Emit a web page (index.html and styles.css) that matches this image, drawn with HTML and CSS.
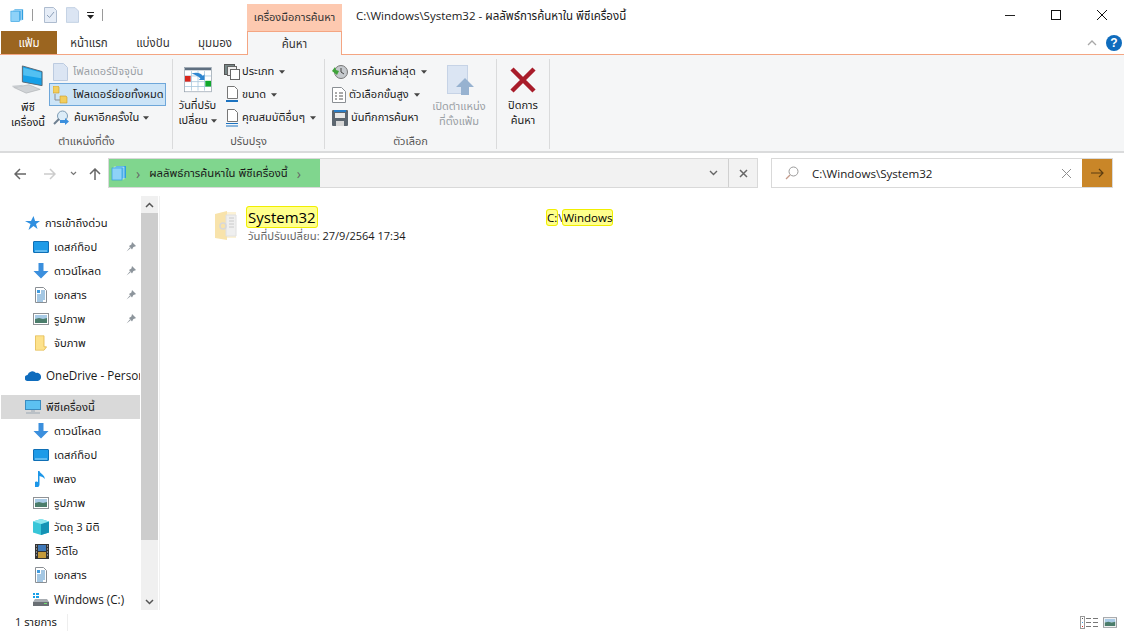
FILE: index.html
```html
<!DOCTYPE html>
<html lang="th">
<head>
    <meta charset="UTF-8">
    <title>C:\Windows\System32 - ผลลัพธ์การค้นหาใน พีซีเครื่องนี้</title>
    <link rel="stylesheet" href="styles.css">
</head>
<body>
    <svg class="defs" width="0" height="0">
        <symbol id="i-lib" viewBox="0 0 16 16">
            <rect x="5" y="1" width="10" height="12" fill="#2f9fe0"/>
            <rect x="3" y="2" width="10" height="12" fill="#5fb8ee" stroke="#fff" stroke-width=".5"/>
            <rect x="1" y="3" width="10" height="12" fill="#8ed2f8" stroke="#2f9fe0" stroke-width=".7"/>
        </symbol>
        <symbol id="i-desktop" viewBox="0 0 16 12">
            <rect x=".5" y=".5" width="15" height="11" rx=".5" fill="#1e9be8" stroke="#0f6fb5"/>
            <rect x="2" y="9.500" width="12" height="1" fill="#a5dcf8"/>
        </symbol>
        <symbol id="i-down" viewBox="0 0 16 16">
            <path d="M5.500 0h5v8h5L8 15.500.5 8h5z" fill="#3b8fdd"/>
        </symbol>
        <symbol id="i-doc" viewBox="0 0 12 16">
            <path d="M.5.500h8l3 3v12H.5z" fill="#fff" stroke="#8a8f94"/>
            <path d="M2 3h3v3H2z" fill="#3f9be0"/>
            <path d="M6 4h4M6 6h4M2 8h8M2 10h8M2 12h8M2 14h6" stroke="#4a90c8"/>
        </symbol>
        <symbol id="i-pic" viewBox="0 0 16 12">
            <rect x=".5" y=".5" width="15" height="11" fill="#fff" stroke="#8f9296"/>
            <rect x="2" y="2" width="12" height="4" fill="#a9cbe6"/>
            <path d="M2 6l4-1 4 1 4-1v5H2z" fill="#4b7d6b"/>
        </symbol>
        <symbol id="i-pin" viewBox="0 0 12 12">
            <path d="M7 1l4 4-1 .6-1.600 .4-1.400 2.400L4 5l2.400-1.400.4-1.600zM4.800 6.400L1.500 10.500 5.600 7.200z" fill="#8d959c"/>
        </symbol>
        <symbol id="i-folder-plain" viewBox="0 0 14 18">
            <path d="M.5.500h10v13l3 0-3 4H.5z" fill="#fde28c" stroke="#e3b94e"/>
        </symbol>
        <symbol id="i-page" viewBox="0 0 15 18">
            <path d="M.5.500h10l4 4v13H.5z" fill="#dbe5f3" stroke="#bccbe0"/>
        </symbol>
        <symbol id="i-caret" viewBox="0 0 7 4">
            <path d="M0 0h7L3.500 4z" fill="#444"/>
        </symbol>
    </svg>

    <div class="window">
        <header class="titlebar">
            <div class="qat">
                <svg width="14" height="15" viewBox="0 0 16 16"><use href="#i-lib"/></svg>
                <span class="qat-sep"></span>
                <svg class="qat-check" width="13" height="16" viewBox="0 0 13 16">
                    <path d="M.5.500h9l3 3v12H.5z" fill="#e6edf7" stroke="#aebccf"/>
                    <path d="M3 8l2.500 2.500L10 5" fill="none" stroke="#8da0b8"/>
                </svg>
                <svg class="qat-page" width="13" height="16"><use href="#i-page"/></svg>
                <svg class="qat-more" width="7" height="7" viewBox="0 0 7 7">
                    <path d="M0 0h7v1H0zM0 3h7L3.500 7z" fill="#222"/>
                </svg>
                <span class="qat-sep"></span>
            </div>
            <div class="context-tab">เครื่องมือการค้นหา</div>
            <div class="window-title">C:\Windows\System32 - ผลลัพธ์การค้นหาใน พีซีเครื่องนี้</div>
            <div class="window-controls">
                <span class="win-btn"><svg width="10" height="1"><rect width="10" height="1" fill="#222"/></svg></span>
                <span class="win-btn"><svg width="10" height="10"><rect x=".5" y=".5" width="9" height="9" fill="none" stroke="#111"/></svg></span>
                <span class="win-btn"><svg width="10" height="10"><path d="M0 0l10 10M10 0L0 10" stroke="#111"/></svg></span>
            </div>
        </header>

        <nav class="tabs">
            <a class="tab tab-file">แฟ้ม</a>
            <a class="tab tab-home">หน้าแรก</a>
            <a class="tab tab-share">แบ่งปัน</a>
            <a class="tab tab-view">มุมมอง</a>
            <a class="tab tab-search">ค้นหา</a>
            <div class="tabs-right">
                <svg width="10" height="6" viewBox="0 0 10 6"><path d="M1 5l4-4 4 4" fill="none" stroke="#a8a8a8" stroke-width="1.300"/></svg>
                <span class="help">?</span>
            </div>
        </nav>

        <section class="ribbon">
            <div class="group group-location">
                <div class="group-body">
                    <div class="big-btn btn-pc">
                        <svg width="32" height="30" viewBox="0 0 34 32">
                            <path d="M11 1l21 6v15l-21-4z" fill="#16a0e8" stroke="#5a6570"/>
                            <path d="M12 3l19 5v6L12 11z" fill="#52c0f2"/>
                            <path d="M2 24l16-3 12 5-15 4z" fill="#d0d3d6" stroke="#a8abaf" stroke-width=".6"/>
                            <path d="M0 22l12-1-2 2-9 1z" fill="#c8ccd0"/>
                        </svg>
                        <span>พีซี<br>เครื่องนี้</span>
                    </div>
                    <div class="small-col col-location">
                        <div class="small-btn is-off"><svg width="15" height="18"><use href="#i-page"/></svg><span>โฟลเดอร์ปัจจุบัน</span></div>
                        <div class="small-btn is-on">
                            <svg width="15" height="18" viewBox="0 0 15 18">
                                <path d="M0 0h5l1 1v6H0z" fill="#f2ce5e" stroke="#c99b2a" stroke-width=".6"/>
                                <path d="M7 10h6l1 1v6H7z" fill="#f2ce5e" stroke="#c99b2a" stroke-width=".6"/>
                                <path d="M2 8v6h5" fill="none" stroke="#8a8f94"/>
                            </svg>
                            <span>โฟลเดอร์ย่อยทั้งหมด</span>
                        </div>
                        <div class="small-btn">
                            <svg width="16" height="16" viewBox="0 0 16 16">
                                <circle cx="9.500" cy="6" r="5" fill="#dcecf8" stroke="#7d9cb5"/>
                                <path d="M6 9l-5 5" stroke="#6d7f90" stroke-width="2"/>
                                <path d="M7 10h5V8l4 3.500-4 3.500v-2H7z" fill="#3b8fdd"/>
                            </svg>
                            <span>ค้นหาอีกครั้งใน</span><svg class="caret" width="6" height="4"><use href="#i-caret"/></svg>
                        </div>
                    </div>
                </div>
                <div class="group-label">ตำแหน่งที่ตั้ง</div>
            </div>

            <div class="group group-refine">
                <div class="group-body">
                    <div class="big-btn btn-date">
                        <svg width="28" height="26" viewBox="0 0 34 32">
                            <rect x=".5" y=".5" width="33" height="30" fill="#fff" stroke="#8c99a6" stroke-width=".8"/>
                            <rect x="1" y="1" width="32" height="3" fill="#5f6f80"/>
                            <path d="M1 11h32M1 18h32M1 24h32M9 5v24M17 5v24M25 5v24" stroke="#a9c7de"/>
                            <rect x="1" y="11" width="7" height="7" fill="#d9261c"/>
                            <rect x="26" y="17" width="7" height="7" fill="#10a82c"/>
                            <path d="M9 8c6-2 11-1 14 3l2-2v7h-7l2-2c-3-3-6-4-11-6z" fill="#2f86d0"/>
                        </svg>
                        <span>วันที่ปรับ<br>เปลี่ยน <svg class="caret" width="6" height="4"><use href="#i-caret"/></svg></span>
                    </div>
                    <div class="small-col col-refine">
                        <div class="small-btn">
                            <svg width="16" height="16" viewBox="0 0 16 16">
                                <rect x=".5" y=".5" width="10" height="10" fill="#778888" stroke="#555"/>
                                <rect x="3.500" y="2.500" width="9" height="9" fill="#eee" stroke="#666"/>
                                <rect x="6.500" y="5.500" width="9" height="10" fill="#fff" stroke="#666"/>
                            </svg>
                            <span>ประเภท</span><svg class="caret" width="6" height="4"><use href="#i-caret"/></svg>
                        </div>
                        <div class="small-btn">
                            <svg width="16" height="18" viewBox="0 0 16 18">
                                <path d="M3.500.5h7l3 3v9h-10z" fill="#fff" stroke="#777"/>
                                <path d="M2 15h12" stroke="#1b72c0" stroke-width="2"/>
                            </svg>
                            <span>ขนาด</span><svg class="caret" width="6" height="4"><use href="#i-caret"/></svg>
                        </div>
                        <div class="small-btn">
                            <svg width="16" height="18" viewBox="0 0 16 18">
                                <path d="M3.500.5h7l3 3v9h-10z" fill="#fff" stroke="#777"/>
                                <path d="M2 14.500h12M2 17h12" stroke="#1b72c0"/>
                            </svg>
                            <span>คุณสมบัติอื่นๆ</span><svg class="caret" width="6" height="4"><use href="#i-caret"/></svg>
                        </div>
                    </div>
                </div>
                <div class="group-label">ปรับปรุง</div>
            </div>

            <div class="group group-options">
                <div class="group-body">
                    <div class="small-col col-options">
                        <div class="small-btn">
                            <svg width="16" height="16" viewBox="0 0 16 16">
                                <circle cx="9" cy="8" r="6.500" fill="#c5c9cd" stroke="#777"/>
                                <path d="M9 4v4l3 2" fill="none" stroke="#444"/>
                                <path d="M0 7l3-4 1 3 3 1-2 4z" fill="#3fa33a"/>
                            </svg>
                            <span>การค้นหาล่าสุด</span><svg class="caret" width="6" height="4"><use href="#i-caret"/></svg>
                        </div>
                        <div class="small-btn">
                            <svg width="14" height="16" viewBox="0 0 14 16">
                                <path d="M.5.500h9l4 4v11H.5z" fill="#fff" stroke="#8a8f94"/>
                                <path d="M3 6h2M7 6h4M3 9h2M7 9h4M3 12h2M7 12h4" stroke="#555"/>
                            </svg>
                            <span>ตัวเลือกขั้นสูง</span><svg class="caret" width="6" height="4"><use href="#i-caret"/></svg>
                        </div>
                        <div class="small-btn">
                            <svg width="16" height="16" viewBox="0 0 16 16">
                                <rect width="16" height="16" rx="1" fill="#5c6670"/>
                                <rect x="2" y="0" width="12" height="2" fill="#2a7ec8"/>
                                <rect x="3" y="3" width="10" height="5" fill="#e8e8e8"/>
                                <rect x="4" y="11" width="8" height="5" fill="#d8d8d8"/>
                            </svg>
                            <span>บันทึกการค้นหา</span>
                        </div>
                    </div>
                    <div class="big-btn btn-open is-off">
                        <svg width="28" height="32" viewBox="0 0 28 32">
                            <rect x=".5" y=".5" width="20" height="28" fill="#dbe5f3" stroke="#c6d3e6"/>
                            <path d="M18 13l9 9h-5v8h-8v-8H9z" fill="#97b2d0"/>
                        </svg>
                        <span>เปิดตำแหน่ง<br>ที่ตั้งแฟ้ม</span>
                    </div>
                </div>
                <div class="group-label">ตัวเลือก</div>
            </div>

            <div class="group group-close">
                <div class="group-body">
                    <div class="big-btn btn-close">
                        <svg width="26" height="26" viewBox="0 0 26 26">
                            <path d="M2 2l22 22M24 2L2 24" stroke="#a81c2a" stroke-width="4.500"/>
                        </svg>
                        <span>ปิดการ<br>ค้นหา</span>
                    </div>
                </div>
            </div>
        </section>

        <div class="navbar">
            <div class="nav-arrows">
                <svg width="12" height="12" viewBox="0 0 12 12"><path d="M6 1L1 6l5 5M1 6h11" fill="none" stroke="#666" stroke-width="1.500"/></svg>
                <svg width="12" height="12" viewBox="0 0 12 12"><path d="M6 1l5 5-5 5M11 6H0" fill="none" stroke="#ccc" stroke-width="1.500"/></svg>
                <svg class="nav-recent" width="7" height="5" viewBox="0 0 7 5"><path d="M1 1l2.500 2.500L6 1" fill="none" stroke="#777" stroke-width="1.200"/></svg>
                <svg width="12" height="12" viewBox="0 0 12 12"><path d="M1 6l5-5 5 5M6 1v11" fill="none" stroke="#666" stroke-width="1.500"/></svg>
            </div>
            <div class="address">
                <div class="address-fill">
                    <svg width="16" height="16"><use href="#i-lib"/></svg>
                    <span class="crumb-sep">›</span>
                    <span class="crumb">ผลลัพธ์การค้นหาใน พีซีเครื่องนี้</span>
                    <span class="crumb-sep">›</span>
                </div>
                <div class="address-end">
                    <span class="address-btn"><svg width="9" height="6" viewBox="0 0 9 6"><path d="M1 1l3.500 3.500L8 1" fill="none" stroke="#666" stroke-width="1.400"/></svg></span>
                    <span class="address-btn"><svg width="9" height="9" viewBox="0 0 9 9"><path d="M1 1l7 7M8 1L1 8" stroke="#666" stroke-width="1.500"/></svg></span>
                </div>
            </div>
            <div class="searchbox">
                <svg class="search-glass" width="14" height="14" viewBox="0 0 14 14">
                    <circle cx="8.500" cy="5.500" r="4.500" fill="none" stroke="#9a9a9a"/>
                    <path d="M5 9l-4 4" stroke="#c49a8a" stroke-width="1.200"/>
                </svg>
                <span class="search-text">C:\Windows\System32</span>
                <svg class="search-clear" width="9" height="9" viewBox="0 0 9 9"><path d="M0 0l9 9M9 0L0 9" stroke="#8f8f8f"/></svg>
                <span class="search-go">
                    <svg width="13" height="10" viewBox="0 0 13 10"><path d="M0 5h12M8 1l4 4-4 4" fill="none" stroke="#5c3d10" stroke-width="1.200"/></svg>
                </span>
            </div>
        </div>

        <main class="main">
            <aside class="sidebar">
                <ul class="tree">
                    <li class="row row-top">
                        <svg width="15" height="15" viewBox="0 0 15 15"><path d="M8.500 0l1.600 5H15l-4 3 1.500 5-4-3-5 4 2-6L0 5h6z" fill="#2f8fe0"/></svg>
                        <span>การเข้าถึงด่วน</span>
                    </li>
                    <li class="row row-sub"><svg width="16" height="12"><use href="#i-desktop"/></svg><span>เดสก์ท็อป</span><svg class="pin" width="12" height="12"><use href="#i-pin"/></svg></li>
                    <li class="row row-sub"><svg width="16" height="16"><use href="#i-down"/></svg><span>ดาวน์โหลด</span><svg class="pin" width="12" height="12"><use href="#i-pin"/></svg></li>
                    <li class="row row-sub"><svg class="narrow" width="12" height="16"><use href="#i-doc"/></svg><span>เอกสาร</span><svg class="pin" width="12" height="12"><use href="#i-pin"/></svg></li>
                    <li class="row row-sub"><svg width="16" height="12"><use href="#i-pic"/></svg><span>รูปภาพ</span><svg class="pin" width="12" height="12"><use href="#i-pin"/></svg></li>
                    <li class="row row-sub"><svg class="narrow" width="12" height="16" viewBox="0 0 14 18"><use href="#i-folder-plain"/></svg><span>จับภาพ</span></li>
                    <li class="row row-top row-gap">
                        <svg width="16" height="11" viewBox="0 0 16 11"><path d="M3 11a3 3 0 0 1-.5-6A5 5 0 0 1 11 3a3.500 3.500 0 0 1 2 8z" fill="#0f6cbd"/></svg>
                        <span class="latin">OneDrive - Personal</span>
                    </li>
                    <li class="row row-top row-gap is-selected">
                        <svg width="16" height="14" viewBox="0 0 16 14"><rect x=".5" y=".5" width="15" height="9" fill="#5cc1f2" stroke="#3a8cc0"/><path d="M6 11h4M1 13h14" stroke="#9aa7b3"/></svg>
                        <span>พีซีเครื่องนี้</span>
                    </li>
                    <li class="row row-sub"><svg width="16" height="16"><use href="#i-down"/></svg><span>ดาวน์โหลด</span></li>
                    <li class="row row-sub"><svg width="16" height="12"><use href="#i-desktop"/></svg><span>เดสก์ท็อป</span></li>
                    <li class="row row-sub"><svg class="narrow" width="11" height="16" viewBox="0 0 11 16"><path d="M3 0h1.500c.5 3 6 4 5 8-1-2-3-2.500-5-3v8.500A3 3 0 1 1 3 11z" fill="#1c96e8"/></svg><span>เพลง</span></li>
                    <li class="row row-sub"><svg width="16" height="12"><use href="#i-pic"/></svg><span>รูปภาพ</span></li>
                    <li class="row row-sub"><svg width="16" height="16" viewBox="0 0 16 16"><path d="M8 0l8 2.500v11L8 16 0 13.500v-11z" fill="#38c6d8"/><path d="M8 5l8-2.500v11L8 16z" fill="#1593b5"/><path d="M8 0l8 2.500L8 5 0 2.500z" fill="#8ce6ef"/></svg><span>วัตถุ 3 มิติ</span></li>
                    <li class="row row-sub"><svg class="narrow" width="14" height="15" viewBox="0 0 14 15"><rect width="14" height="15" fill="#333"/><rect x="3" y="1" width="8" height="6" fill="#3f78b8"/><rect x="3" y="8" width="8" height="6" fill="#c49a3a"/><path d="M1 2h1M1 5h1M1 8h1M1 11h1M12 2h1M12 5h1M12 8h1M12 11h1" stroke="#ddd"/></svg><span>วิดีโอ</span></li>
                    <li class="row row-sub"><svg class="narrow" width="12" height="16"><use href="#i-doc"/></svg><span>เอกสาร</span></li>
                    <li class="row row-sub"><svg width="16" height="14" viewBox="0 0 16 14"><path d="M0 1h2v2H0zM3 1h3v2H3zM0 4h2v2H0zM3 4h3v2H3z" fill="#18a0e8"/><path d="M2 7h12l2 3v4H0v-4z" fill="#a8adb2"/><rect x="0" y="10" width="16" height="4" fill="#6a6f74"/><rect x="11" y="11" width="3" height="1" fill="#6fe06f"/></svg><span class="latin">Windows (C:)</span></li>
                </ul>
            </aside>
            <div class="scrollbar">
                <span class="scroll-arrow"><svg width="9" height="6" viewBox="0 0 9 6"><path d="M1 5l3.500-3.500L8 5" fill="none" stroke="#555" stroke-width="1.500"/></svg></span>
                <span class="scroll-thumb"></span>
                <span class="scroll-arrow"><svg width="9" height="6" viewBox="0 0 9 6"><path d="M1 1l3.500 3.500L8 1" fill="none" stroke="#555" stroke-width="1.500"/></svg></span>
            </div>
            <div class="results">
                <div class="result">
                    <svg class="result-icon" width="23" height="29" viewBox="0 0 23 29">
                        <path d="M1 3l12-3v29L1 27z" fill="#f8e3ab"/>
                        <path d="M13 1h9v26H13z" fill="#fcf2d6"/>
                        <path d="M12 4h10v21H12z" fill="#efefef" stroke="#e0e0e0"/>
                        <circle cx="9" cy="15" r="3" fill="none" stroke="#d8d8d8" stroke-width="1.500"/>
                        <path d="M15 7h5M15 10h5M15 13h5M15 16h5" stroke="#cacaca"/>
                    </svg>
                    <div class="result-text">
                        <div class="result-name"><mark>System32</mark></div>
                        <div class="result-meta"><span class="meta-key">วันที่ปรับเปลี่ยน:</span> 27/9/2564 17:34</div>
                    </div>
                    <div class="result-path"><mark>C:</mark><span class="path-sep">\</span><mark>Windows</mark></div>
                </div>
            </div>
        </main>

        <footer class="statusbar">
            <span class="status-count">1 รายการ</span>
            <div class="view-btns">
                <svg width="19" height="13" viewBox="0 0 19 13">
                    <rect x=".5" y=".5" width="4" height="12" fill="#fff" stroke="#999"/>
                    <rect x="2" y="2" width="1" height="1" fill="#555"/><rect x="2" y="6" width="1" height="1" fill="#3f9be0"/><rect x="2" y="10" width="1" height="1" fill="#d9261c"/>
                    <path d="M6 2.500h5M13 2.500h5M6 6.500h5M13 6.500h5M6 10.500h5M13 10.500h5" stroke="#777"/>
                </svg>
                <svg width="14" height="11"><use href="#i-pic"/></svg>
            </div>
        </footer>
    </div>
</body>
</html>
```

FILE: styles.css
```css
* {
    box-sizing: border-box;
    margin: 0;
    padding: 0;
}
html, body {
    height: 100%;
    overflow: hidden;
}
body {
    font-family: "Open Sans", "Noto Sans", "Noto Sans Thai", "DejaVu Sans", sans-serif;
    font-size: 11.5px;
    color: #1a1a1a;
    background: #fff;
}
svg {
    display: block;
    flex: none;
}
.defs {
    position: absolute;
}
.window {
    display: flex;
    flex-direction: column;
    height: 633px;
    overflow: hidden;
}

/* title bar */
.titlebar {
    display: flex;
    height: 31px;
    flex: none;
}
.qat {
    display: flex;
    align-items: center;
    width: 247px;
    padding-left: 10px;
    margin-top: -1px;
}
.qat-sep {
    width: 1px;
    height: 12px;
    margin-left: 8px;
    background: #9a9a9a;
}
.qat-check {
    margin-left: 11px;
}
.qat-page {
    margin-left: 9px;
}
.qat-more {
    margin-left: 8px;
}
.context-tab {
    width: 95px;
    margin-top: 4px;
    background: #fdc9b0;
    text-align: center;
    line-height: 26px;
    font-size: 11px;
    color: #333;
}
.window-title {
    margin-left: 14px;
    line-height: 31px;
    font-size: 11.500px;
}
.window-controls {
    display: flex;
    margin-left: auto;
    margin-right: -1px;
}
.win-btn {
    display: flex;
    align-items: center;
    justify-content: center;
    width: 46px;
    height: 30px;
}

/* tabs */
.tabs {
    display: flex;
    height: 24px;
    flex: none;
    padding-left: 1px;
    border-bottom: 1px solid #f4a582;
}
.tab {
    text-align: center;
    line-height: 23px;
    font-size: 11.500px;
    color: #333;
}
.tab-file {
    width: 56px;
    height: 23px;
    background: #9b6520;
    color: #fff;
}
.tab-home {
    width: 64px;
}
.tab-share {
    width: 64px;
}
.tab-view {
    width: 60px;
}
.tab-search {
    width: 95px;
    height: 24px;
    margin-left: 2px;
    background: #f5f6f7;
    border: 1px solid #f4a582;
    border-bottom: none;
    line-height: 24px;
}
.tabs-right {
    display: flex;
    align-items: center;
    gap: 9px;
    margin-left: auto;
    padding-right: 2px;
}
.help {
    width: 16px;
    height: 16px;
    border-radius: 50%;
    background: #0f6cbd;
    color: #fff;
    font: bold 12px/16px "Liberation Sans", sans-serif;
    text-align: center;
}

/* ribbon */
.ribbon {
    display: flex;
    height: 98px;
    flex: none;
    padding: 3px 0 2px 1px;
    background: #f5f6f7;
    border-bottom: 2px solid #dadbdc;
    border-top: 1px solid #f5f6f7;
}
.group {
    display: flex;
    flex-direction: column;
    border-right: 1px solid #dadbdc;
}
.group-location {
    width: 172px;
}
.group-refine {
    width: 152px;
}
.group-options {
    width: 172px;
}
.group-close {
    width: 53px;
}
.group-body {
    display: flex;
    flex: none;
    height: 74px;
}
.group-label {
    text-align: center;
    line-height: 16px;
    font-size: 11px;
    color: #555;
}
.big-btn {
    display: flex;
    flex-direction: column;
    align-items: center;
    text-align: center;
    line-height: 15px;
    font-size: 11px;
}
.big-btn .caret {
    display: inline-block;
    vertical-align: middle;
}
.is-off {
    color: #9a9fa5;
}
.btn-pc {
    width: 54px;
    padding-top: 6px;
    gap: 4px;
}
.btn-date {
    width: 47px;
    margin-left: 1px;
    padding-top: 8px;
    gap: 4px;
}
.btn-open {
    width: 58px;
    padding-top: 6px;
    gap: 1px;
    margin-left: 3px;
}
.btn-open svg {
    margin-left: 4px;
}
.btn-close {
    width: 52px;
    padding-top: 8px;
    gap: 4px;
}
.small-col {
    display: flex;
    flex-direction: column;
    padding-top: 1px;
}
.small-btn {
    display: flex;
    align-items: center;
    gap: 5px;
    height: 23px;
    padding-left: 4px;
    white-space: nowrap;
    font-size: 11px;
}
.small-btn .caret {
    margin-left: -1px;
}
.small-btn.is-on {
    width: 117px;
    background: #cce4f7;
    border: 1px solid #6ea7da;
    padding-left: 3px;
}
.col-location {
    margin-left: -6px;
}
.col-refine .small-btn {
    gap: 2px;
    padding-left: 3px;
}
.col-refine .caret {
    margin-left: 3px;
}
.col-options {
    width: 102px;
    padding-left: 3px;
}
.col-options .small-btn {
    gap: 3px;
}
.col-options .caret {
    margin-left: 2px;
}

/* address row */
.navbar {
    display: flex;
    align-items: flex-start;
    height: 43px;
    flex: none;
    padding-top: 5px;
}
.nav-arrows {
    display: flex;
    align-items: center;
    width: 108px;
    height: 31px;
    padding-left: 14px;
    gap: 18px;
}
.nav-recent {
    margin: 0 -6px 0 -4px;
}
.address {
    display: flex;
    width: 650px;
    height: 30px;
    border: 1px solid #d9d9d9;
    background: #f2f2f2;
}
.address-fill {
    display: flex;
    align-items: center;
    width: 211px;
    background: #80d68e;
    padding-left: 2px;
    gap: 9px;
}
.crumb {
    font-size: 11.300px;
}
.crumb-sep {
    color: #666;
    font-size: 14px;
}
.address-end {
    display: flex;
    margin-left: auto;
}
.address-btn {
    display: flex;
    align-items: center;
    justify-content: center;
    width: 29px;
    border-left: 1px solid #d0d0d0;
}
.address-btn:first-child {
    border-left: none;
}
.searchbox {
    display: flex;
    align-items: center;
    width: 342px;
    height: 30px;
    margin-left: 13px;
    border: 1px solid #d9d9d9;
}
.search-glass {
    margin-left: 13px;
}
.search-text {
    margin-left: 13px;
    font-size: 11.600px;
}
.search-clear {
    margin-left: auto;
    margin-right: 11px;
}
.search-go {
    display: flex;
    align-items: center;
    justify-content: center;
    width: 30px;
    height: 28px;
    background: #c98628;
}

/* sidebar + results */
.main {
    display: flex;
    flex: 1;
    min-height: 0;
}
.sidebar {
    width: 141px;
    padding: 15px 1px 0 1px;
    overflow: hidden;
}
.tree {
    list-style: none;
}
.row {
    display: flex;
    align-items: center;
    height: 24px;
    white-space: nowrap;
    overflow: hidden;
    font-size: 11.200px;
    position: relative;
}
.row span {
    margin-left: 5px;
}
.row-top {
    padding-left: 24px;
}
.row-sub {
    padding-left: 32px;
}
.row-gap {
    margin-top: 8px;
}
.row .narrow {
    margin: 0 2px;
}
.latin {
    font-size: 11.700px;
}
.pin {
    position: absolute;
    right: 3px;
    top: 6px;
}
.is-selected {
    background: #d9d9d9;
}
.scrollbar {
    display: flex;
    flex-direction: column;
    width: 18px;
    background: #f0f0f0;
    border-right: 1px solid #fff;
}
.scroll-arrow {
    display: flex;
    align-items: center;
    justify-content: center;
    height: 17px;
}
.scroll-thumb {
    flex: 1;
    background: #cdcdcd;
    margin-bottom: 53px;
}
.results {
    flex: 1;
    border-left: 1px solid #f0f0f0;
    padding: 11px 0 0 54px;
}
.result {
    display: flex;
}
.result-icon {
    margin-top: 4px;
}
.result-text {
    margin-left: 9px;
    width: 300px;
}
.result-name {
    font-size: 15px;
    line-height: 21px;
}
mark {
    background: #ffff8c;
    border: 1px solid #f0ee00;
    border-radius: 3px;
}
.result-name mark {
    padding: 0 1px;
}
.result-meta {
    font-size: 11px;
    line-height: 16px;
    margin-left: 2px;
}
.meta-key {
    color: #666;
    font-size: 11.300px;
}
.result-path {
    font-size: 11.500px;
    padding-top: 3px;
    line-height: 16px;
}

/* status bar */
.statusbar {
    display: flex;
    align-items: center;
    height: 23px;
    flex: none;
    padding: 1px 7px 0 15px;
    font-size: 11px;
}
.status-count {
    width: 53px;
    border-right: 1px solid #eee;
}
.view-btns {
    display: flex;
    align-items: center;
    gap: 4px;
    margin-left: auto;
}
```
